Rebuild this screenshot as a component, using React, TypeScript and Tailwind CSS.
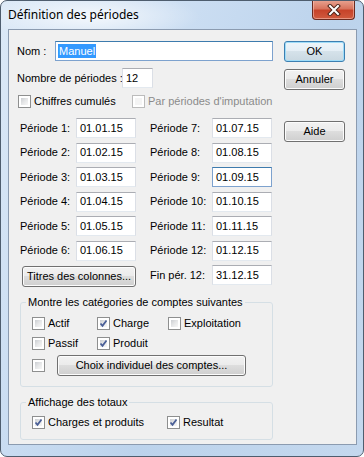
import React from "react";

const font = "font-['Liberation_Sans',Arial,sans-serif]";

const TextBox = ({ value, width, focus }: { value: string; width: string; focus?: boolean }) => (
    <div
        className={`${width} h-[20px] shrink-0 bg-white border flex items-center pl-[3px] text-[11px] text-black ${
            focus ? "border-[#7da2ce] border-t-[#3d7bad]" : "border-[#e3e9ef] border-t-[#abadb3] border-l-[#dbdfe6] border-r-[#dbdfe6]"
        }`}
    >
        {value}
    </div>
);

const Button = ({ label, width, isDefault }: { label: string; width: string; isDefault?: boolean }) => (
    <div
        className={`${width} h-[21px] rounded-[3px] border flex items-center justify-center text-[11px] text-black whitespace-nowrap ${
            isDefault
                ? "border-[#3c7fb1] shadow-[inset_0_0_0_1px_#9fdcf8] bg-[linear-gradient(to_bottom,#eef5fa_0%,#e4eef5_49%,#d5e2ea_50%,#c9d8e1_100%)]"
                : "border-[#707070] shadow-[inset_0_0_0_1px_#fcfcfc] bg-[linear-gradient(to_bottom,#f2f2f2_0%,#ebebeb_49%,#dddddd_50%,#cfcfcf_100%)]"
        }`}
    >
        {label}
    </div>
);

const Check = ({ checked, disabled }: { checked?: boolean; disabled?: boolean }) => (
    <div
        className={`relative w-[13px] h-[13px] shrink-0 border bg-white p-[2px] ${
            disabled ? "border-[#bcbcbc]" : "border-[#8e8f8f]"
        }`}
    >
        <div
            className={`w-full h-full ${
                disabled ? "bg-[#f4f4f4]" : "bg-[linear-gradient(135deg,#cbced2_0%,#e6e7e8_50%,#f7f7f7_100%)]"
            }`}
        />
        {checked && (
            <svg className="absolute left-[1px] top-[1px]" width="9" height="9" viewBox="0 0 9 9">
                <path d="M1.5 4.5 L3.5 6.8 L7.5 1.5" fill="none" stroke="#4a5f97" strokeWidth="1.8" />
            </svg>
        )}
    </div>
);

const CheckLabel = ({ label, checked, disabled, width }: { label: string; checked?: boolean; disabled?: boolean; width?: string }) => (
    <div className={`flex items-center gap-[3px] h-[13px] whitespace-nowrap ${width ?? ""}`}>
        <Check checked={checked} disabled={disabled} />
        <span className={`text-[11px] leading-[13px] ${disabled ? "text-[#8b8b8b]" : "text-black"}`}>{label}</span>
    </div>
);

const periods: [string, string, string, string, boolean?][] = [
    ["Période 1:", "01.01.15", "Période 7:", "01.07.15"],
    ["Période 2:", "01.02.15", "Période 8:", "01.08.15"],
    ["Période 3:", "01.03.15", "Période 9:", "01.09.15", true],
    ["Période 4:", "01.04.15", "Période 10:", "01.10.15"],
    ["Période 5:", "01.05.15", "Période 11:", "01.11.15"],
    ["Période 6:", "01.06.15", "Période 12:", "01.12.15"],
];

const App = () => {
    return (
        <div className="w-[364px] h-[457px] bg-white">
            <div className="w-[364px] h-[457px] rounded-[7px] border border-[#4e5d6e] bg-[linear-gradient(115deg,#dce9f7_0%,#cddff3_30%,#bcd3ec_60%,#c4d8ee_100%)] relative overflow-hidden">
                <div className="absolute left-[-20px] top-[-10px] w-[220px] h-[50px] rounded-full bg-[radial-gradient(ellipse_at_center,rgba(255,255,255,0.75)_0%,rgba(255,255,255,0)_70%)] pointer-events-none" />
                <div className="relative h-[28px] flex items-start">
                    <span className="mt-[6px] ml-[7px] text-[12px] leading-[16px] text-black font-['Noto_Sans',sans-serif]">
                        Définition des périodes
                    </span>
                    <div className="ml-auto mr-[8px] -mt-[1px] w-[43px] h-[20px] rounded-b-[4px] border border-[#6b2a1f] border-t-0 flex items-center justify-center bg-[linear-gradient(to_bottom,#e9a593_0%,#d8745e_45%,#c7432a_55%,#d05a3e_100%)] shadow-[inset_0_0_0_1px_rgba(255,210,200,0.5)]">
                        <svg width="14" height="12" viewBox="0 0 14 12">
                            <path d="M3 2 L11 10 M11 2 L3 10" stroke="#4d2318" strokeWidth="4" strokeLinecap="square" />
                            <path d="M3 2 L11 10 M11 2 L3 10" stroke="#ffffff" strokeWidth="2" strokeLinecap="square" />
                        </svg>
                    </div>
                </div>

                <div className={`relative ml-[7px] w-[349px] h-[416px] border border-[#8b9bb0] bg-[#f0f0f0] ${font} flex pt-[11px] pl-[8px]`}>
                    <div className="w-[256px] shrink-0 flex flex-col">
                        <div className="flex items-center h-[20px]">
                            <span className="w-[38px] shrink-0 text-[11px]">Nom :</span>
                            <div className="flex-1 h-[20px] bg-white border border-[#7da2ce] border-t-[#3d7bad] flex items-center pl-[2px]">
                                <span className="bg-[#3399ff] text-white text-[11px] leading-[14px] px-[1px]">Manuel</span>
                            </div>
                        </div>
                        <div className="flex items-center h-[20px] mt-[7px]">
                            <span className="w-[105px] shrink-0 whitespace-nowrap text-[11px]">Nombre de périodes :</span>
                            <TextBox value="12" width="w-[31px]" />
                        </div>
                        <div className="flex items-center mt-[7px] ml-[1px]">
                            <CheckLabel label="Chiffres cumulés" width="w-[114px]" />
                            <CheckLabel label="Par périodes d'imputation" disabled />
                        </div>

                        <div className="flex flex-col gap-y-[4.5px] mt-[10px] ml-[3px]">
                            {periods.map(([l1, v1, l2, v2, f]) => (
                                <div key={l1} className="flex items-center h-[20px] text-[11px] whitespace-nowrap">
                                    <span className="w-[56px] shrink-0">{l1}</span>
                                    <TextBox value={v1} width="w-[60px]" />
                                    <span className="w-[62px] shrink-0 ml-[14px]">{l2}</span>
                                    <TextBox value={v2} width="w-[60px]" focus={f} />
                                </div>
                            ))}
                            <div className="flex items-start h-[22px] text-[11px] whitespace-nowrap">
                                <div className="mt-[1px] ml-[2px]">
                                    <Button label="Titres des colonnes..." width="w-[114px]" />
                                </div>
                                <span className="w-[62px] shrink-0 ml-[14px] h-[20px] flex items-center">Fin pér. 12:</span>
                                <TextBox value="31.12.15" width="w-[60px]" />
                            </div>
                        </div>

                        <fieldset className="mt-[8px] ml-[3px] w-[253px] border border-[#d5dfe5] rounded-[3px] pb-[10px]">
                            <legend className="ml-[5px] px-[2px] text-[11px] leading-[14px] whitespace-nowrap">
                                Montre les catégories de comptes suivantes
                            </legend>
                            <div className="pl-[11px]">
                                <div className="flex mt-[8px]">
                                    <CheckLabel label="Actif" width="w-[65px]" />
                                    <CheckLabel label="Charge" checked width="w-[71px]" />
                                    <CheckLabel label="Exploitation" />
                                </div>
                                <div className="flex mt-[7px]">
                                    <CheckLabel label="Passif" width="w-[65px]" />
                                    <CheckLabel label="Produit" checked />
                                </div>
                                <div className="flex items-center mt-[5px]">
                                    <Check />
                                    <div className="ml-[12px]">
                                        <Button label="Choix individuel des comptes..." width="w-[189px]" />
                                    </div>
                                </div>
                            </div>
                        </fieldset>

                        <fieldset className="mt-[8px] ml-[3px] w-[253px] border border-[#d5dfe5] rounded-[3px] pb-[10px]">
                            <legend className="ml-[5px] px-[2px] text-[11px] leading-[14px] whitespace-nowrap">Affichage des totaux</legend>
                            <div className="flex mt-[7px] pl-[11px]">
                                <CheckLabel label="Charges et produits" checked width="w-[135px]" />
                                <CheckLabel label="Resultat" checked />
                            </div>
                        </fieldset>
                    </div>

                    <div className="ml-[11px] flex flex-col">
                        <Button label="OK" width="w-[61px]" isDefault />
                        <div className="mt-[7px]">
                            <Button label="Annuler" width="w-[61px]" />
                        </div>
                        <div className="mt-[31px]">
                            <Button label="Aide" width="w-[61px]" />
                        </div>
                    </div>
                </div>
            </div>
        </div>
    );
};

export default App;
